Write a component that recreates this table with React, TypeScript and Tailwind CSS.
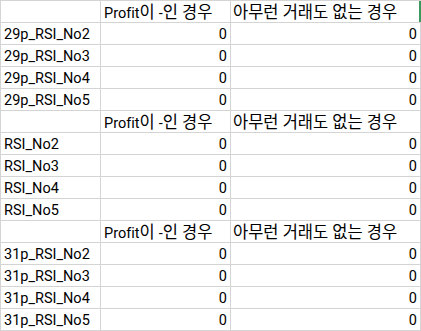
const blocks = [
  { prefix: '29p_', rows: ['No2', 'No3', 'No4', 'No5'] },
  { prefix: '', rows: ['No2', 'No3', 'No4', 'No5'] },
  { prefix: '31p_', rows: ['No2', 'No3', 'No4', 'No5'] },
];

const cell = 'h-[21px] pt-[3px] border-r border-[#d4d4d4] flex items-center overflow-hidden whitespace-nowrap';
const ko = 'text-[16.5px]';

export default function App() {
  return (
    <div
      className="w-[421px] h-[331px] bg-white text-black text-[14.5px] leading-none overflow-hidden [font-variant-ligatures:none]"
      style={{ fontFamily: 'Roboto, "Noto Sans CJK KR", sans-serif' }}
    >
      <div className="border-t border-l border-[#d4d4d4]">
        {blocks.map((block, bi) => (
          <div key={bi}>
            <div className="flex border-b border-[#d4d4d4]">
              <div className={`${cell} w-[100px]`} />
              <div className={`${cell} w-[130px] pl-[3px]`}>
                <span>
                  Profit<span className={ko}>{'이 '}</span>-<span className={ko}>{'인  경우'}</span>
                </span>
              </div>
              <div
                className={`${cell} w-[190px] pl-[2px] ${
                  bi === 0 ? 'border-r-2 border-r-[#3a9a5e]' : ''
                }`}
              >
                <span className={ko}>아무런 거래도 없는 경우</span>
              </div>
            </div>
            {block.rows.map((r) => (
              <div key={r} className="flex border-b border-[#d4d4d4]">
                <div className={`${cell} w-[100px] pl-[3px]`}>
                  <span>
                    {block.prefix}RSI_{r}
                  </span>
                </div>
                <div className={`${cell} w-[130px] justify-end pr-[3px]`}>0</div>
                <div className={`${cell} w-[190px] justify-end pr-[3px]`}>0</div>
              </div>
            ))}
          </div>
        ))}
      </div>
    </div>
  );
}
